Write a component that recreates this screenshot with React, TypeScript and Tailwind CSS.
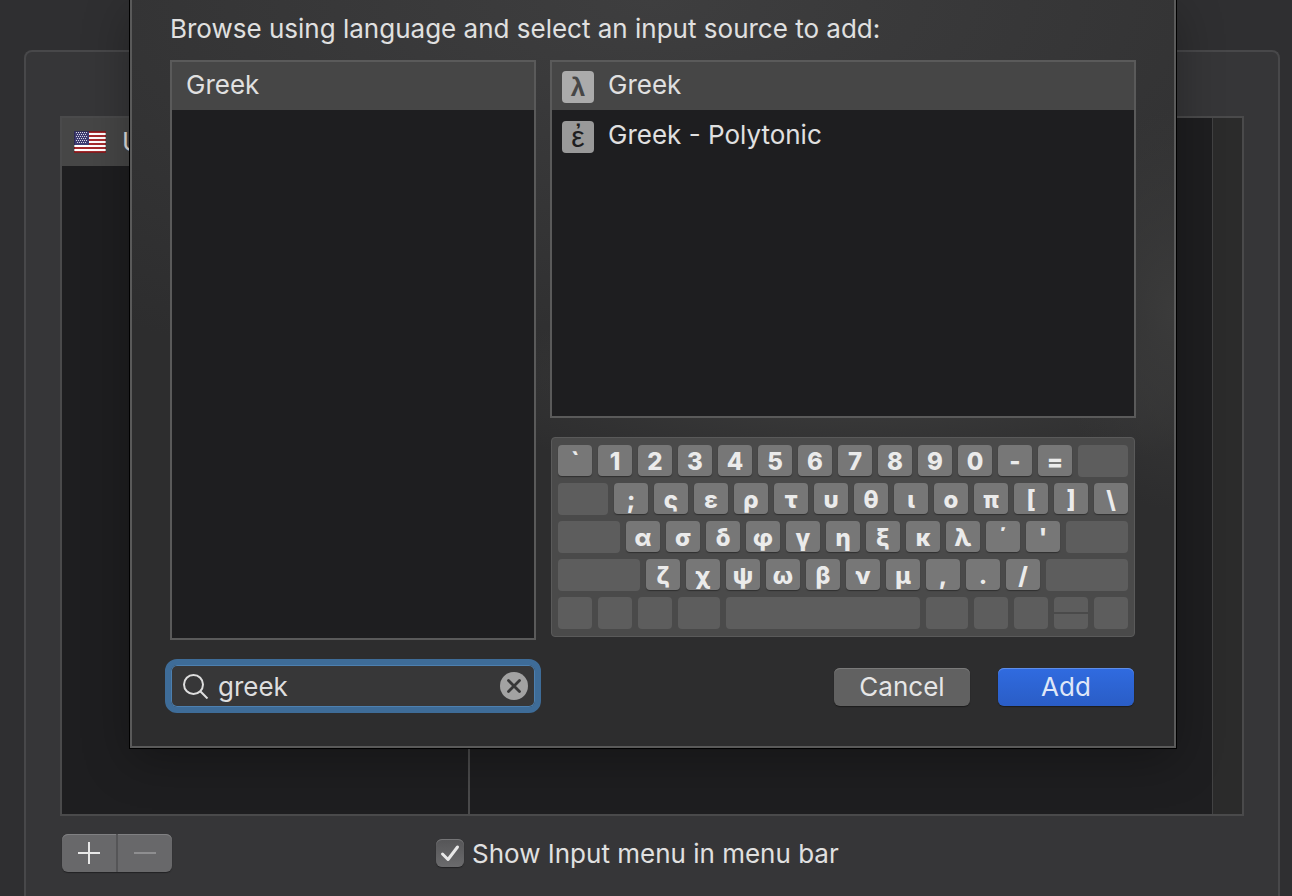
import { useState } from 'react';

// ── Data ─────────────────────────────────────────────────────────────────────

const SOURCES = [
  { id: 'greek', glyph: 'λ', label: 'Greek' },
  { id: 'polytonic', glyph: 'ἐ', label: 'Greek - Polytonic' },
];

const NUMBER_ROW = ['`', '1', '2', '3', '4', '5', '6', '7', '8', '9', '0', '-', '='];
const TOP_ROW = [';', 'ς', 'ε', 'ρ', 'τ', 'υ', 'θ', 'ι', 'ο', 'π', '[', ']', '\\'];
const HOME_ROW = ['α', 'σ', 'δ', 'φ', 'γ', 'η', 'ξ', 'κ', 'λ', '΄', "'"];
const BOTTOM_ROW = ['ζ', 'χ', 'ψ', 'ω', 'β', 'ν', 'μ', ',', '.', '/'];

// ── Flag ─────────────────────────────────────────────────────────────────────

function UsFlag() {
  const stars = [0, 1, 2, 3, 4, 5].flatMap((row) =>
    [0, 1, 2, 3, 4, 5].slice(row % 2).map((col) => ({
      x: 2 + col * 2 + (row % 2 ? -1 : 0),
      y: 1 + row * 2,
    })),
  );

  return (
    <svg viewBox="0 0 32 22" className="h-[22px] w-8 shrink-0" aria-hidden="true">
      <rect width="32" height="22" fill="#fff" />
      {[0, 4, 8, 12, 16, 20].map((y) => (
        <rect key={y} y={y} width="32" height="2" fill="#a52a2d" />
      ))}
      <rect width="15" height="14" fill="#403d72" />
      {stars.map((s) => (
        <rect key={`${s.x}-${s.y}`} x={s.x} y={s.y} width="1" height="1" fill="#d8d8e6" />
      ))}
      <rect x="0.5" y="0.5" width="31" height="21" fill="none" stroke="#000" strokeOpacity="0.25" />
    </svg>
  );
}

// ── Keyboard preview ─────────────────────────────────────────────────────────

function Keys({ chars }: { chars: string[] }) {
  return (
    <>
      {chars.map((c) => (
        <span
          key={c}
          className="mb-px flex w-[34px] shrink-0 items-center justify-center rounded-sm bg-[#777777] pt-0.5 text-2xl leading-8 font-extrabold text-[#ebebeb] shadow-[0_1px_1px_#303030]"
        >
          {c}
        </span>
      ))}
    </>
  );
}

function Blank({ className = 'flex-1 rounded-sm' }: { className?: string }) {
  return <span className={`bg-[#5d5d5d] ${className}`} />;
}

function Keyboard() {
  const row = 'flex h-8 gap-1.5';

  return (
    <div className="mx-px flex flex-col gap-1.5 rounded-sm border border-[#5a5a5a] bg-[#4a4a4a] px-1.5 py-[7px]">
      <div className={row}>
        <Keys chars={NUMBER_ROW} />
        <Blank />
      </div>
      <div className={row}>
        <Blank />
        <Keys chars={TOP_ROW} />
      </div>
      <div className={row}>
        <Blank />
        <Keys chars={HOME_ROW} />
        <Blank />
      </div>
      <div className={row}>
        <Blank />
        <Keys chars={BOTTOM_ROW} />
        <Blank />
      </div>
      <div className={row}>
        <Blank className="w-[34px] rounded-sm" />
        <Blank className="w-[34px] rounded-sm" />
        <Blank className="w-[34px] rounded-sm" />
        <Blank className="w-[42px] rounded-sm" />
        <Blank />
        <Blank className="w-[42px] rounded-sm" />
        <Blank className="w-[34px] rounded-sm" />
        <Blank className="w-[34px] rounded-sm" />
        {/* up / down arrows share one key */}
        <span className="flex w-[34px] flex-col gap-0.5">
          <Blank className="flex-1 rounded-t-sm" />
          <Blank className="flex-1 rounded-b-sm" />
        </span>
        <Blank className="w-[34px] rounded-sm" />
      </div>
    </div>
  );
}

// ── Search ───────────────────────────────────────────────────────────────────

function SearchField() {
  const [query, setQuery] = useState('greek');

  return (
    <div className="-mx-[5px] flex h-[54px] items-center rounded-xl border-[6px] border-[#3e6c98] bg-[#373738] pr-[7px] pl-3 shadow-[inset_0_0_0_1px_#4d80b0]">
      <svg viewBox="0 0 26 26" className="size-[26px] shrink-0" fill="none" stroke="#dedede" strokeWidth="2" aria-hidden="true">
        <circle cx="10.5" cy="11.5" r="9.5" />
        <path d="M17.3 18.3 24.500 25.500" />
      </svg>
      <input
        type="text"
        aria-label="Search languages"
        value={query}
        onChange={(e) => setQuery(e.target.value)}
        className="ml-[9px] min-w-0 flex-1 bg-transparent pt-0.5 text-[#dedede] outline-none"
      />
      <button type="button" aria-label="Clear search" onClick={() => setQuery('')} className="shrink-0">
        <svg viewBox="0 0 28 28" className="size-7">
          <circle cx="14" cy="14" r="14" fill="#a2a2a2" />
          <path d="m8.5 8.5 11 11m0-11-11 11" stroke="#373738" strokeWidth="2.8" strokeLinecap="round" />
        </svg>
      </button>
    </div>
  );
}

// ── Sheet ────────────────────────────────────────────────────────────────────

function AddSourceSheet() {
  const [selected, setSelected] = useState('greek');

  return (
    <div
      role="dialog"
      aria-labelledby="sheet-title"
      className="absolute top-0 right-[116px] left-[130px] border-2 border-t-0 border-[#5a5a5a] bg-[#2d2d2e] bg-[radial-gradient(ellipse_120px_200px_at_100%_310px,#3b3b3b,transparent),radial-gradient(ellipse_420px_90px_at_70%_390px,#3c3c3c,transparent),radial-gradient(ellipse_900px_400px_at_50%_0,#3e3e3f,transparent)] px-[38px] pb-[33px] shadow-[0_0_0_1px_#000,0_12px_44px_rgba(0,0,0,0.3)]"
    >
      <h1 id="sheet-title" className="pt-[13px] pb-[15px] leading-8">
        Browse using language and select an input source to add:
      </h1>

      <div className="flex gap-3.5">
        <div className="flex w-[366px] shrink-0 flex-col">
          <ul className="h-[580px] border-2 border-[#5a5a5a] bg-[#1e1e20]">
            <li>
              <button type="button" className="flex h-12 w-full items-end bg-[#464646] px-3.5 pb-[7px] text-left">
                <span className="leading-9">Greek</span>
              </button>
            </li>
          </ul>
          <div className="mt-[19px]">
            <SearchField />
          </div>
        </div>

        <div className="flex min-w-0 flex-1 flex-col">
          <ul className="mb-[19px] h-[358px] border-2 border-[#5a5a5a] bg-[#1e1e20]">
            {SOURCES.map((s, i) => (
              <li key={s.id}>
                <button
                  type="button"
                  onClick={() => setSelected(s.id)}
                  className={`flex w-full items-end gap-3.5 px-2.5 pb-[7px] text-left ${i === 0 ? 'h-12' : 'h-[50px]'} ${
                    selected === s.id ? 'bg-[#464646]' : ''
                  }`}
                >
                  <span
                    className={`flex size-8 items-center justify-center rounded-sm font-['Liberation_Sans','DejaVu_Sans',sans-serif] ${
                      i === 0 ? 'text-[26px] font-bold' : 'text-[30px]'
                    } ${selected === s.id ? 'bg-[#ababab] text-[#464646]' : 'bg-[#999999] text-[#1e1e20]'}`}
                  >
                    {s.glyph}
                  </span>
                  <span className="leading-9">{s.label}</span>
                </button>
              </li>
            ))}
          </ul>

          <Keyboard />

          <div className="mt-[31px] mr-0.5 flex justify-end gap-7">
            <button type="button" className="h-[38px] w-[136px] rounded-md bg-[#616161] text-[#e6e6e6] shadow-[inset_0_1px_0_#7a7a7a,0_1px_1px_#1c1c1c]">
              Cancel
            </button>
            <button type="button" className="h-[38px] w-[136px] rounded-md bg-linear-to-b from-[#306be0] to-[#2a5dc6] text-[#dfe7f8] shadow-[inset_0_1px_0_#5f8ee8,0_1px_1px_#1c1c1c]">
              Add
            </button>
          </div>
        </div>
      </div>
    </div>
  );
}

// ── Preferences pane behind the sheet ────────────────────────────────────────

function InputSourcesPane() {
  const [showMenu, setShowMenu] = useState(true);

  return (
    <div className="mr-3 ml-6 flex flex-1 flex-col rounded-t-lg border-2 border-b-0 border-[#48484a] bg-[#363638] px-[34px] pt-16">
      <div className="flex h-[700px] border-2 border-[#4a4a4b] bg-[#1e1e20]">
        <ul className="w-[408px] border-r-2 border-[#4a4a4b]">
          <li className="flex h-12 items-center gap-4 bg-[#464646] px-3">
            <UsFlag />
            U.S.
          </li>
        </ul>
        <div className="flex-1" />
        <div className="w-[30px] border-l border-[#424243] bg-[#2b2b2b]" />
      </div>

      <div className="mt-[18px] grid grid-cols-[374px_1fr] items-center pl-0.5">
        <div className="flex h-[38px] w-[110px] overflow-hidden rounded-md bg-[#68686a] shadow-[inset_0_1px_0_#808082,0_1px_1px_#222224]">
          <button type="button" aria-label="Add input source" className="flex flex-1 items-center justify-center border-r-2 border-[#555557]">
            <svg viewBox="0 0 22 22" className="size-[22px]" stroke="#e8e8e8" strokeWidth="2">
              <path d="M0 11h22M11 0v22" />
            </svg>
          </button>
          <button type="button" aria-label="Remove input source" disabled className="flex flex-1 items-center justify-center">
            <svg viewBox="0 0 22 22" className="size-[22px]" stroke="#8e8e90" strokeWidth="2">
              <path d="M0 11h22" />
            </svg>
          </button>
        </div>

        <label className="flex items-center gap-2">
          <span className="relative size-7 shrink-0">
            <input
              type="checkbox"
              checked={showMenu}
              onChange={(e) => setShowMenu(e.target.checked)}
              className="block size-7 appearance-none rounded-md bg-linear-to-b from-[#555557] to-[#6b6b6d] shadow-[inset_0_1px_0_#757577,0_1px_1px_#222224]"
            />
            {showMenu && (
              <svg viewBox="0 0 28 28" className="pointer-events-none absolute inset-0 size-7" fill="none" stroke="#e8e8e8" strokeWidth="3" strokeLinecap="round" strokeLinejoin="round">
                <path d="M6.5 15 12 20.5 21.5 8" />
              </svg>
            )}
          </span>
          <span className="pt-0.5">Show Input menu in menu bar</span>
        </label>
      </div>
    </div>
  );
}

export default function App() {
  return (
    <main className="relative flex min-h-screen flex-col overflow-hidden bg-[#2f2f31] pt-[50px] font-[Inter,'Noto_Sans',sans-serif] text-[26px] leading-8 text-[#e0e0e0]">
      <InputSourcesPane />
      <AddSourceSheet />
    </main>
  );
}
